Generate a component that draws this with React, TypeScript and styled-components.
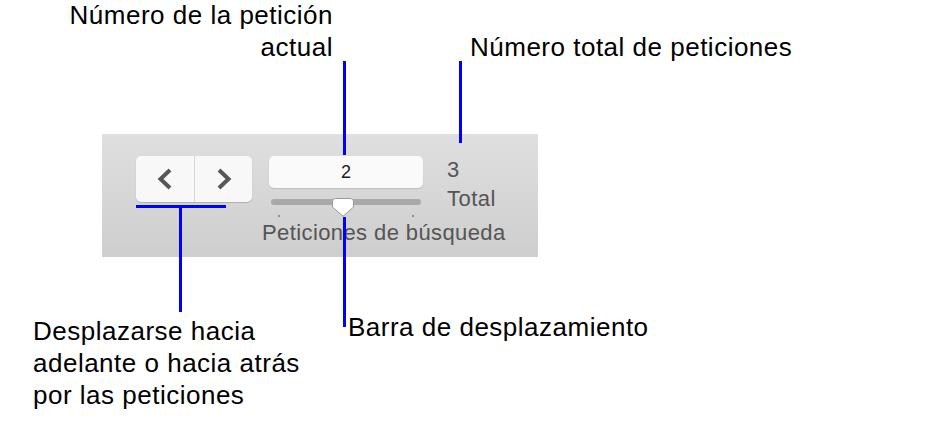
import React from "react";
import styled, { createGlobalStyle } from "styled-components";

const GlobalStyle = createGlobalStyle`
  html, body {
    margin: 0;
    padding: 0;
    background: #ffffff;
  }
  body {
    font-family: "Liberation Sans", Arial, sans-serif;
  }
`;

const Figure = styled.div`
  position: relative;
  width: 927px;
  height: 446px;
  box-sizing: border-box;
  padding: 134px 0 0 102px;
  overflow: hidden;
`;

/* toolbar panel */

const Panel = styled.div`
  width: 436px;
  height: 123px;
  box-sizing: border-box;
  padding: 22px 0 0 34px;
  display: flex;
  align-items: flex-start;
  background: linear-gradient(#dfdfdf, #cecece);
`;

const NavGroup = styled.div`
  display: flex;
  height: 46px;
  border-radius: 5px;
  background: #f8f8f8;
  box-shadow: 0 1px 1px rgba(0, 0, 0, 0.18);
  overflow: hidden;
`;

const NavButton = styled.button<{ $divider?: boolean }>`
  width: 58px;
  height: 46px;
  padding: 0;
  border: none;
  border-left: ${({ $divider }) => ($divider ? "1px solid #d6d6d6" : "none")};
  background: transparent;
  display: flex;
  align-items: center;
  justify-content: center;
`;

const RecordColumn = styled.div`
  width: 154px;
  margin-left: 17px;
  display: flex;
  flex-direction: column;
`;

const RecordField = styled.div`
  height: 32px;
  border-radius: 5px;
  background: #fafafa;
  box-shadow: 0 1px 1px rgba(0, 0, 0, 0.12);
  display: flex;
  align-items: center;
  justify-content: center;
  font-size: 18px;
  color: #1a1a1a;
`;

const Track = styled.div`
  position: relative;
  height: 6px;
  margin: 11px 2px 0;
  border-radius: 3px;
  background: #a9a9a9;
`;

const Thumb = styled.svg`
  position: absolute;
  left: 61px;
  top: -1px;
`;

const Ticks = styled.div`
  display: flex;
  justify-content: space-between;
  padding: 0 9px 0 9px;
  margin-top: 10px;
  height: 2px;
`;

const Tick = styled.span`
  width: 2px;
  height: 2px;
  background: #8c8c8c;
`;

const SliderLabel = styled.div`
  margin: 4px 0 0 -7px;
  white-space: nowrap;
  font-size: 22px;
  letter-spacing: 0.4px;
  line-height: 24px;
  color: #555555;
`;

const CountColumn = styled.div`
  margin: -1px 0 0 24px;
  font-size: 22px;
  line-height: 29px;
  letter-spacing: 0.5px;
  color: #555555;
`;

/* annotations */

const Callout = styled.div<{ $align?: "left" | "right" }>`
  position: absolute;
  font-size: 26px;
  line-height: 32px;
  letter-spacing: 0.5px;
  color: #000000;
  white-space: nowrap;
  text-align: ${({ $align }) => $align ?? "left"};
`;

const Leader = styled.div`
  position: absolute;
  background: #0000ff;
`;

const Chevron = ({ dir }: { dir: "left" | "right" }) => (
  <svg width="18" height="22" viewBox="0 0 18 22">
    <polyline
      points={dir === "left" ? "14,2 4.5,11 14,20" : "4,2 13.5,11 4,20"}
      fill="none"
      stroke="#575757"
      strokeWidth="4"
      strokeLinecap="butt"
      strokeLinejoin="miter"
    />
  </svg>
);

const App = () => (
  <>
    <GlobalStyle />
    <Figure>
      <Panel>
        <NavGroup>
          <NavButton aria-label="Anterior">
            <Chevron dir="left" />
          </NavButton>
          <NavButton $divider aria-label="Siguiente">
            <Chevron dir="right" />
          </NavButton>
        </NavGroup>
        <RecordColumn>
          <RecordField>2</RecordField>
          <Track>
            <Thumb width="22" height="19" viewBox="0 0 22 19">
              <path
                d="M3.5 0.5 H18.5 A3 3 0 0 1 21.5 3.5 V9 L11 18.3 L0.5 9 V3.5 A3 3 0 0 1 3.5 0.5 Z"
                fill="#ffffff"
                stroke="#9a9a9a"
                strokeWidth="1"
              />
            </Thumb>
          </Track>
          <Ticks>
            <Tick />
            <Tick />
          </Ticks>
          <SliderLabel>Peticiones de búsqueda</SliderLabel>
        </RecordColumn>
        <CountColumn>
          <div>3</div>
          <div>Total</div>
        </CountColumn>
      </Panel>

      <Callout $align="right" style={{ right: 594, top: -1 }}>
        Número de la petición
        <br />
        actual
      </Callout>
      <Callout style={{ left: 470, top: 31 }}>Número total de peticiones</Callout>
      <Callout style={{ left: 348, top: 311 }}>Barra de desplazamiento</Callout>
      <Callout style={{ left: 33, top: 315 }}>
        Desplazarse hacia
        <br />
        adelante o hacia atrás
        <br />
        por las peticiones
      </Callout>

      <Leader style={{ left: 343, top: 61, width: 3, height: 94 }} />
      <Leader style={{ left: 459, top: 61, width: 3, height: 82 }} />
      <Leader style={{ left: 136, top: 205, width: 90, height: 3 }} />
      <Leader style={{ left: 179, top: 205, width: 3, height: 107 }} />
      <Leader style={{ left: 343, top: 217, width: 3, height: 110 }} />
    </Figure>
  </>
);

export default App;
